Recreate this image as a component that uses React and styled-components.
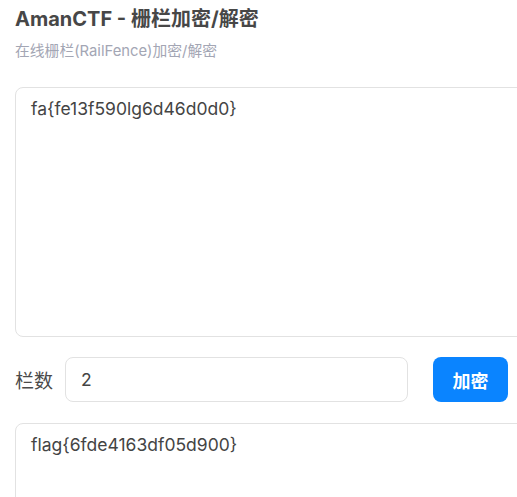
import React, { useState } from 'react';
import styled, { createGlobalStyle } from 'styled-components';

const GlobalStyle = createGlobalStyle`
  html, body {
    margin: 0;
    padding: 0;
    background: #fff;
    overflow: hidden;
  }
  body {
    font-family: Inter, "Noto Sans CJK SC", sans-serif;
  }
`;

const Page = styled.div`
  padding: 5px 0 0 15px;
  width: 540px;
`;

const Title = styled.h1`
  margin: 0;
  font-size: 20px;
  line-height: 28px;
  font-weight: 700;
  color: #474747;
`;

const Subtitle = styled.p`
  margin: 8px 0 0;
  font-size: 14.8px;
  line-height: 20px;
  color: #a3a6b4;
`;

const TextBox = styled.textarea`
  display: block;
  box-sizing: border-box;
  width: 520px;
  height: ${({ $h }) => $h}px;
  margin-top: ${({ $top }) => $top}px;
  padding: 8px 15px;
  border: 1px solid #e2e2e2;
  border-radius: 8px;
  font-family: Inter, "Noto Sans CJK SC", sans-serif;
  font-size: 17.5px;
  line-height: 26px;
  color: #444;
  resize: none;
  outline: none;
`;

const Row = styled.div`
  display: flex;
  align-items: center;
  margin-top: 20px;
  height: 45px;
`;

const Label = styled.label`
  font-size: 19px;
  color: #4a4a4a;
  width: 50px;
`;

const NumInput = styled.input`
  box-sizing: border-box;
  width: 343px;
  height: 45px;
  padding: 0 15px;
  border: 1px solid #e2e2e2;
  border-radius: 8px;
  font-family: Inter, sans-serif;
  font-size: 17.5px;
  color: #444;
  outline: none;
`;

const Button = styled.button`
  margin-left: 25px;
  width: 75px;
  height: 45px;
  border: none;
  border-radius: 8px;
  background: #0a84ff;
  color: #fff;
  font-family: "Noto Sans CJK SC", sans-serif;
  font-size: 18px;
  font-weight: 700;
  cursor: pointer;
`;

const railFence = (text, n) => {
  if (n < 2) return text;
  const rows = Array.from({ length: n }, () => '');
  for (let i = 0; i < text.length; i++) rows[i % n] += text[i];
  return rows.join('');
};

export default function App() {
  const [input, setInput] = useState('fa{fe13f590lg6d46d0d0}');
  const [rails, setRails] = useState('2');
  const [output, setOutput] = useState('flag{6fde4163df05d900}');

  return (
    <Page>
      <GlobalStyle />
      <Title>AmanCTF - 栅栏加密/解密</Title>
      <Subtitle>在线栅栏(RailFence)加密/解密</Subtitle>
      <TextBox $h={250} $top={26} value={input} onChange={(e) => setInput(e.target.value)} />
      <Row>
        <Label>栏数</Label>
        <NumInput value={rails} onChange={(e) => setRails(e.target.value)} />
        <Button onClick={() => setOutput(railFence(input, parseInt(rails, 10) || 2))}>加密</Button>
      </Row>
      <TextBox $h={150} $top={21} value={output} onChange={(e) => setOutput(e.target.value)} />
    </Page>
  );
}
